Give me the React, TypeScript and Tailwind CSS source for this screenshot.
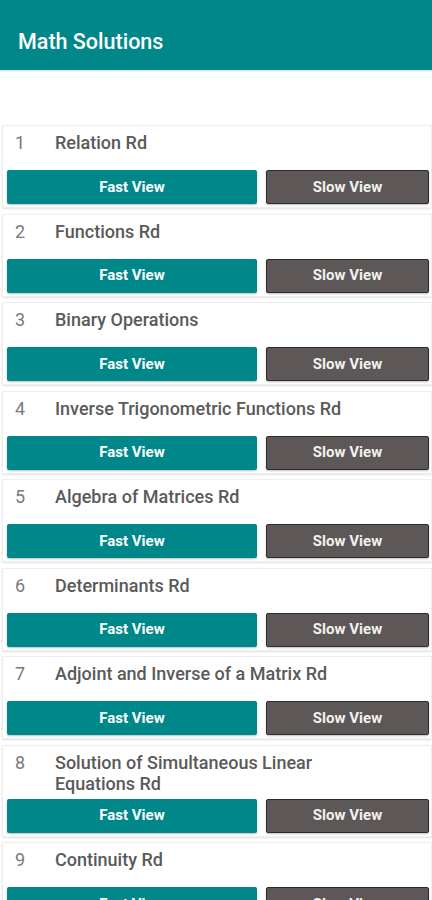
import React from "react";

const chapters = [
  "Relation Rd",
  "Functions Rd",
  "Binary Operations",
  "Inverse Trigonometric Functions Rd",
  "Algebra of Matrices Rd",
  "Determinants Rd",
  "Adjoint and Inverse of a Matrix Rd",
  "Solution of Simultaneous Linear Equations Rd",
  "Continuity Rd",
];

const ChapterCard: React.FC<{ index: number; title: string }> = ({ index, title }) => (
  <div className="ml-[2px] mb-[5.5px] bg-white border border-[#eeeeee] shadow-[0_1px_2px_rgba(0,0,0,0.12)] pl-[4px] pr-[2px] pt-[6px] pb-[3px]">
    <div className="flex min-h-[38px] pb-[5px] text-[18px] leading-[21px]">
      <span className="w-[48px] pl-[8px] text-[#7a7a7a]">{index}</span>
      <span className="flex-1 pr-[36px] font-medium text-[#5a5a5a]">{title}</span>
    </div>
    <div className="flex gap-[9px]">
      <button
        type="button"
        className="w-[250px] h-[34px] rounded-[2px] bg-[#00878a] text-white text-[15px] font-bold shadow-[0_1px_2px_rgba(0,0,0,0.25)]"
      >
        Fast View
      </button>
      <button
        type="button"
        className="flex-1 h-[34px] rounded-[2px] bg-[#5d5757] border border-[#2f2b2b] text-[#f2f2f2] text-[15px] font-bold shadow-[0_1px_2px_rgba(0,0,0,0.25)]"
      >
        Slow View
      </button>
    </div>
  </div>
);

export default function App() {
  return (
    <div className="w-[432px] h-[900px] overflow-hidden bg-white font-['Roboto','Noto_Sans',sans-serif]">
      <header className="h-[70px] bg-[#00878a] flex items-center pl-[18px] pt-[14px] shadow-[0_1px_2px_rgba(0,0,0,0.15)]">
        <h1 className="text-white text-[21.5px] font-medium">Math Solutions</h1>
      </header>
      <div className="pt-[55px]">
        {chapters.map((t, i) => (
          <ChapterCard key={t} index={i + 1} title={t} />
        ))}
      </div>
    </div>
  );
}
